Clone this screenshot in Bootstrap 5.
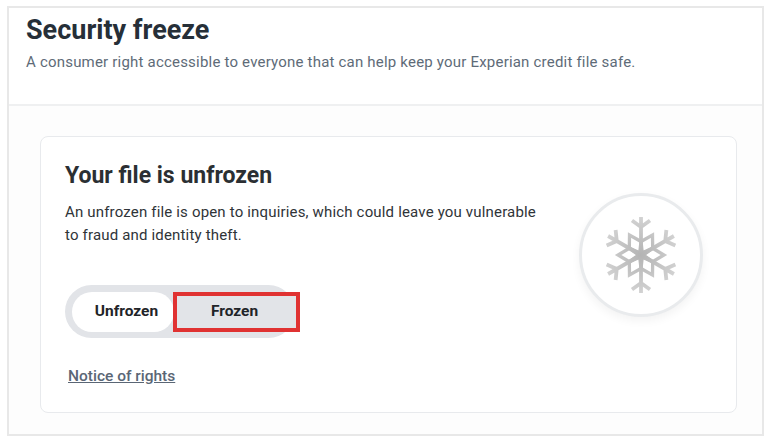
<!doctype html>
<html lang="en">
<head>
<meta charset="utf-8">
<title>Security freeze</title>
<link rel="stylesheet" href="https://cdn.jsdelivr.net/npm/bootstrap@5.3.0/dist/css/bootstrap.min.css">
<style>
html,body{height:100%;background:#fff;overflow:hidden}
body{font-family:Roboto,"Liberation Sans",sans-serif;padding:6px 8px 6px 7px}
.frame-box{height:430px;border:2.5px solid #e8e8e8;background:#fff;display:flex;flex-direction:column}
.head-zone{height:98px;padding:5px 17px 0;border-bottom:2px solid #eff0f1;flex:none}
.head-title{font-size:27px;line-height:34px;font-weight:700;color:#262f38;margin:0 0 4px}
.head-sub{font-size:15px;line-height:22px;letter-spacing:.2px;color:#5e6b78;margin:0}
.body-zone{flex:1;padding:30px 25px 21px 31px;background:#fdfdfd}
.file-panel{height:277px;background:#fff;border:1px solid #e8eaed;border-radius:8px;padding:25px 24px 0;display:flex;justify-content:space-between}
.panel-title{font-size:23px;line-height:28px;font-weight:700;color:#2b2f33;margin:0 0 11px}
.panel-text{font-size:15px;line-height:23px;letter-spacing:.17px;color:#2f3438;margin:0 0 38px;width:480px}
.toggle-track{width:230px;height:53px;border-radius:27px;background:#e2e4e8;padding:7px;display:flex}
.toggle-opt{height:40px;border:0;padding:0;font-size:15.5px;font-weight:700;color:#1f2428;background:transparent;flex:none}
.opt-on{width:102px;background:#fff;border-radius:20px;padding-left:7px}
.opt-off{width:127px;border:4px solid #e03232;background:#e2e4e8;margin-left:-1px;padding-right:4px}
.rights-link{display:inline-block;margin:28px 0 0 3px;font-size:15.5px;line-height:20px;font-weight:500;color:#5a6675;text-decoration:underline}
.flake-disc{width:124px;height:124px;margin:31px 9px 0 0;border-radius:50%;border:3px solid #e9ebed;background:#fff;box-shadow:0 4px 10px rgba(0,0,0,.05);display:flex;align-items:center;justify-content:center;flex:none}
.flake-blur{filter:blur(.35px)}
</style>
</head>
<body>
<div class="frame-box">
  <header class="head-zone">
    <h1 class="head-title">Security freeze</h1>
    <p class="head-sub">A consumer right accessible to everyone that can help keep your Experian credit file safe.</p>
  </header>
  <main class="body-zone">
    <section class="file-panel">
      <div>
        <h2 class="panel-title">Your file is unfrozen</h2>
        <p class="panel-text">An unfrozen file is open to inquiries, which could leave you vulnerable to fraud and identity theft.</p>
        <div class="toggle-track">
          <button type="button" class="toggle-opt opt-on">Unfrozen</button>
          <button type="button" class="toggle-opt opt-off">Frozen</button>
        </div>
        <a href="#" class="rights-link">Notice of rights</a>
      </div>
      <div class="flake-disc">
        <svg class="flake-blur" width="80" height="80" viewBox="-40 -40 80 80" aria-hidden="true">
          <defs>
            <radialGradient id="fg" gradientUnits="userSpaceOnUse" cx="0" cy="0" r="38"><stop offset="0" stop-color="#b4b4b4"/><stop offset=".55" stop-color="#c4c4c4"/><stop offset="1" stop-color="#d2d2d2"/></radialGradient>
            <g id="arm">
              <path d="M0 0V-38M-9 -34.5L0 -28L9 -34.5" fill="none" stroke="url(#fg)" stroke-width="3.8"/>
              <path d="M0 -13.5L11.5 -19.9L11.69 -6.75L1.25 -2.17Z" fill="none" stroke="url(#fg)" stroke-width="3.3"/>
            </g>
          </defs>
          <use href="#arm"/>
          <use href="#arm" transform="rotate(60)"/>
          <use href="#arm" transform="rotate(120)"/>
          <use href="#arm" transform="rotate(180)"/>
          <use href="#arm" transform="rotate(240)"/>
          <use href="#arm" transform="rotate(300)"/>
        </svg>
      </div>
    </section>
  </main>
</div>
<script src="https://cdn.jsdelivr.net/npm/bootstrap@5.3.0/dist/js/bootstrap.bundle.min.js"></script>
</body>
</html>
